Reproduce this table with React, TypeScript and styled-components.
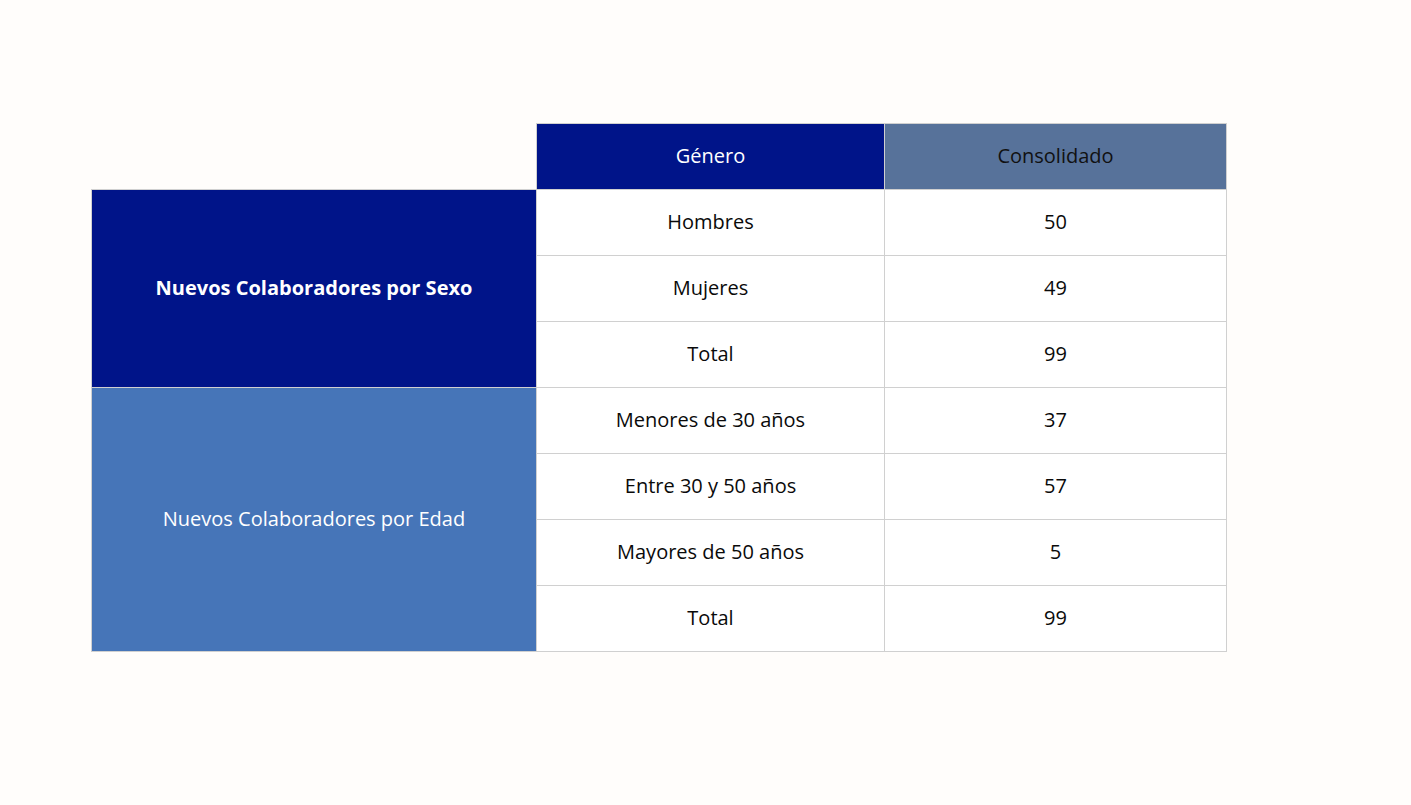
import styled, { createGlobalStyle } from "styled-components";

const GlobalStyle = createGlobalStyle`
  body {
    margin: 0;
    background-color: #fffdfb;
    font-family: "Open Sans", "Liberation Sans", sans-serif;
  }
`;

const Page = styled.div`
  padding: 123px 0 0 91px;
  height: 805px;
  box-sizing: border-box;
`;

const Table = styled.table`
  border-collapse: collapse;
  table-layout: fixed;
  width: 1136px;
`;

const EmptyCell = styled.td`
  border: none;
  padding: 0;
`;

const HeadCell = styled.th<{ $bg: string; $fg: string }>`
  height: 62px;
  padding: 0 0 3px;
  border: 1px solid #d0d0d0;
  background-color: ${(p) => p.$bg};
  color: ${(p) => p.$fg};
  font-size: 20px;
  font-weight: 400;
  text-align: center;
  vertical-align: middle;
`;

const GroupCell = styled.td<{ $bg: string; $bold?: boolean }>`
  padding: 0 0 3px;
  border: 1px solid #d0d0d0;
  background-color: ${(p) => p.$bg};
  color: #ffffff;
  font-size: 20px;
  font-weight: ${(p) => (p.$bold ? 700 : 400)};
  text-align: center;
  vertical-align: middle;
`;

const Cell = styled.td`
  height: 62px;
  padding: 0 0 3px;
  border: 1px solid #d0d0d0;
  background-color: #ffffff;
  color: #0a0a0a;
  font-size: 20px;
  text-align: center;
  vertical-align: middle;
`;

interface Group {
  title: string;
  bg: string;
  bold?: boolean;
  rows: [string, number][];
}

const groups: Group[] = [
  {
    title: "Nuevos Colaboradores por Sexo",
    bg: "#001489",
    bold: true,
    rows: [
      ["Hombres", 50],
      ["Mujeres", 49],
      ["Total", 99],
    ],
  },
  {
    title: "Nuevos Colaboradores por Edad",
    bg: "#4675b8",
    rows: [
      ["Menores de 30 años", 37],
      ["Entre 30 y 50 años", 57],
      ["Mayores de 50 años", 5],
      ["Total", 99],
    ],
  },
];

const App = (): JSX.Element => {
  return (
    <Page>
      <GlobalStyle />
      <Table>
        <colgroup>
          <col style={{ width: 445 }} />
          <col style={{ width: 348 }} />
          <col style={{ width: 342 }} />
        </colgroup>
        <thead>
          <tr>
            <EmptyCell />
            <HeadCell $bg="#001489" $fg="#ffffff">
              Género
            </HeadCell>
            <HeadCell $bg="#57729a" $fg="#111111">
              Consolidado
            </HeadCell>
          </tr>
        </thead>
        <tbody>
          {groups.map((g) =>
            g.rows.map(([label, value], i) => (
              <tr key={g.title + label}>
                {i === 0 && (
                  <GroupCell rowSpan={g.rows.length} $bg={g.bg} $bold={g.bold}>
                    {g.title}
                  </GroupCell>
                )}
                <Cell>{label}</Cell>
                <Cell>{value}</Cell>
              </tr>
            ))
          )}
        </tbody>
      </Table>
    </Page>
  );
};

export default App;
